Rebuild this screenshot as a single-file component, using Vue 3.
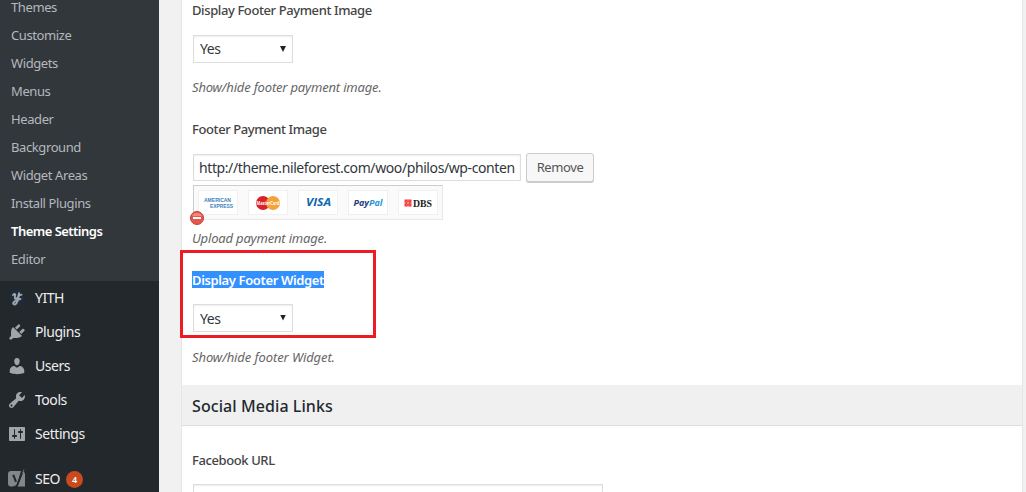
<script setup>
const submenu = ['Themes', 'Customize', 'Widgets', 'Menus', 'Header', 'Background', 'Widget Areas', 'Install Plugins', 'Theme Settings', 'Editor']
const menu = ['YITH', 'Plugins', 'Users', 'Tools', 'Settings', 'SEO']
</script>

<template>
  <div class="page">
    <nav class="sidebar">
      <ul class="submenu">
        <li v-for="s in submenu" :key="s" :class="{ current: s === 'Theme Settings' }"><span>{{ s }}</span></li>
      </ul>
      <ul class="menu">
        <li v-for="m in menu" :key="m" :class="m.toLowerCase()">
          <svg v-if="m === 'YITH'" class="icon" viewBox="0 0 20 20">
            <circle cx="10" cy="10" r="7.8" fill="#1d2c3d" />
            <path d="M6 7q1.500-1.800 2.200-.4q-.8 3.500.1 4.300q1.500.3 2.800-2.300l1-3.300M12.100 5.300q-.9 7.400-2.600 9.800q-2 2.500-3.300.7q-.4-2 3.300-3.200l4-1.700M12.500 7.400l2-.7" fill="none" stroke="#a0a5aa" stroke-width="1.900" stroke-linecap="round" />
          </svg>
          <svg v-else-if="m === 'Plugins'" class="icon" viewBox="0 0 20 20">
            <path d="M13.110 4.360L9.870 7.600 8 5.730l3.240-3.240c.35-.34 1.050-.2 1.560.32.520.510.660 1.210.310 1.550zm-8 1.770l.910-1.120 9.010 9.010-1.190.840c-.710.710-2.630 1.160-3.820 1.160H6.140L4.900 17.260c-.590.590-1.540.590-2.120 0-.590-.580-.590-1.530 0-2.120l1.240-1.240v-3.880c0-1.130.400-3.190 1.090-3.890zm7.260 3.970l3.240-3.240c.340-.35 1.040-.21 1.550.31.520.510.660 1.210.310 1.550l-3.240 3.250z" />
          </svg>
          <svg v-else-if="m === 'Users'" class="icon" viewBox="0 0 20 20">
            <path d="M10 9.250c-2.270 0-2.730-3.440-2.730-3.440C7 4.020 7.820 2 9.970 2c2.160 0 2.980 2.020 2.710 3.810 0 0-.410 3.440-2.680 3.440zm0 2.570L12.720 10c2.390 0 4.520 2.330 4.520 4.530v2.490s-3.650 1.130-7.240 1.130c-3.650 0-7.240-1.130-7.240-1.130v-2.490c0-2.250 1.940-4.480 4.470-4.480z" />
          </svg>
          <svg v-else-if="m === 'Tools'" class="icon" viewBox="0 0 20 20">
            <path d="M16.680 9.770c-1.340 1.340-3.300 1.670-4.950.990l-5.410 6.520c-.990.990-2.590.990-3.580 0s-.990-2.590 0-3.570l6.520-5.420c-.680-1.650-.350-3.610.990-4.950 1.280-1.280 3.120-1.620 4.720-1.060l-2.890 2.890 2.820 2.820 2.860-2.870c.530 1.580.180 3.390-1.080 4.650zM3.810 16.210c.4.390 1.040.390 1.430 0 .4-.4.400-1.040 0-1.430-.390-.4-1.030-.4-1.430 0-.390.390-.390 1.030 0 1.430z" />
          </svg>
          <svg v-else-if="m === 'Settings'" class="icon" viewBox="0 0 20 20">
            <path fill-rule="evenodd" d="M18 16V4c0-.550-.450-1-1-1H3c-.550 0-1 .450-1 1v12c0 .550.450 1 1 1h14c.550 0 1-.450 1-1zM8 11h1c.550 0 1 .450 1 1s-.450 1-1 1H8v1.500c0 .280-.220.500-.5.500s-.5-.220-.5-.5V13H6c-.550 0-1-.450-1-1s.450-1 1-1h1V5.500c0-.280.220-.5.500-.5s.5.220.5.500V11zm5-2h-1c-.550 0-1-.450-1-1s.450-1 1-1h1V5.500c0-.280.220-.5.500-.5s.5.220.5.500V7h1c.550 0 1 .450 1 1s-.450 1-1 1h-1v5.500c0 .280-.220.500-.5.500s-.5-.220-.5-.5V9z" />
          </svg>
          <svg v-else class="icon" viewBox="0 0 20 20">
            <path d="M4 2h10l-4.500 15.500H4q-3 0-3-3V5q0-3 3-3zM16 2.500q2 .8 2 2.500v12.500h-7.500z" fill="#82878c" />
            <path d="M5.500 6.800h1.200l2.300 6M16.300.5l-5.800 15q-1 2.600-4 2.600" fill="none" stroke="#23282d" stroke-width="2" />
            <path d="M17 .4l-1.500 3.800" fill="none" stroke="#82878c" stroke-width=".8" />
          </svg>
          <span class="name">{{ m }}</span>
          <b v-if="m === 'SEO'" class="badge">4</b>
        </li>
      </ul>
    </nav>

    <main class="panel">
      <section class="field first">
        <h4>Display Footer Payment Image</h4>
        <div class="select"><span>Yes</span><i></i></div>
        <p>Show/hide footer payment image.</p>
      </section>
      <section class="field image">
        <h4>Footer Payment Image</h4>
        <div class="row">
          <div class="input"><span>http://theme.nileforest.com/woo/philos/wp-conten</span></div>
          <button><span>Remove</span></button>
        </div>
        <div class="preview">
          <svg class="cards" width="248" height="33" viewBox="0 0 248 33">
            <g fill="#fff" stroke="#f0f0f0">
              <rect v-for="n in 5" :key="n" :x="n * 50 - 45.500" y="4.500" width="39" height="24" />
            </g>
            <g class="logo">
              <g class="amex" fill="#3d80bd" font-size="5.400">
                <text x="10" y="15.500" textLength="27" lengthAdjust="spacingAndGlyphs">AMERICAN</text>
                <text x="16" y="21.500" textLength="23" lengthAdjust="spacingAndGlyphs">EXPRESS</text>
              </g>
              <circle cx="69" cy="17" r="7" fill="#d9222a" />
              <circle cx="79" cy="17" r="7" fill="#f2a33a" />
              <text x="62.500" y="19" font-size="5.500" fill="#fff" textLength="23" lengthAdjust="spacingAndGlyphs">MasterCard</text>
              <text x="112" y="20" font-size="11" font-style="italic" fill="#0d66b0" textLength="25" lengthAdjust="spacingAndGlyphs">VISA</text>
              <text x="159.500" y="19.500" font-size="9" font-style="italic" fill="#253b80" textLength="29" lengthAdjust="spacingAndGlyphs">Pay<tspan fill="#2997d8">Pal</tspan></text>
              <rect x="210.500" y="13.500" width="7" height="7" fill="#f23c43" />
              <path d="M214 13v2M214 19v2M210 17h2M216 17h2M212.500 15.500l3 3M215.500 15.500l-3 3" stroke="#ffb0b0" stroke-width=".7" />
              <text class="dbs" x="219" y="20.500" font-size="10" fill="#222" textLength="19" lengthAdjust="spacingAndGlyphs">DBS</text>
            </g>
          </svg>
          <svg class="delete" viewBox="0 0 14 14">
            <circle cx="7" cy="7" r="6.500" fill="#e8574c" stroke="#bd4038" />
            <path d="M2 5a5.200 4.200 0 0 1 10 0z" fill="#ee8b81" />
            <rect x="3" y="6" width="8" height="2" fill="#fff" />
          </svg>
        </div>
        <p>Upload payment image.</p>
      </section>
      <section class="field widget">
        <h4><mark>Display Footer Widget</mark></h4>
        <div class="select"><span>Yes</span><i></i></div>
        <p>Show/hide footer Widget.</p>
        <div class="outline"></div>
      </section>
      <h3><span>Social Media Links</span></h3>
      <section class="field social">
        <h4>Facebook URL</h4>
        <div class="input wide"></div>
      </section>
    </main>
  </div>
</template>

<style>
body { margin: 0; overflow: hidden; }
</style>

<style scoped>
* { box-sizing: border-box; }
.page { display: flex; width: 1026px; height: 492px; overflow: hidden; background: #f1f1f1; font: 13px/18px "Noto Sans", "Open Sans", sans-serif; color: #444; }
ul { list-style: none; margin: 0; padding: 0; }
.sidebar { width: 159px; flex: none; background: #23282d; }
.submenu { height: 281px; background: #32373c; }
.submenu li { height: 28px; line-height: 28px; padding-left: 11px; color: #b4b9be; letter-spacing: -.4px; }
.submenu li:first-child { height: 21px; line-height: 14px; }
.submenu .current { color: #fff; font-weight: 600; letter-spacing: -.52px; }
.menu li { display: flex; align-items: center; height: 34px; padding-left: 7px; color: #eee; font-size: 14px; letter-spacing: -.45px; }
.menu .seo { margin-top: 11px; }
.icon { width: 20px; height: 20px; margin-right: 8px; fill: #a0a5aa; }
.badge { width: 17px; height: 17px; margin-left: 6px; border-radius: 50%; background: #ca4a1f; color: #fff; font-size: 9px; line-height: 17px; text-align: center; font-weight: 600; letter-spacing: 0; }
.panel { width: 842px; flex: none; margin-left: 22px; border: solid #e5e5e5; border-width: 0 1px; background: #fff; }
.field { position: relative; padding-left: 10px; }
h4, p, h3 { margin: 0; }
h4 { height: 18px; font-weight: 500; font-size: 13px; line-height: 18px; white-space: nowrap; letter-spacing: -.4px; }
p { height: 18px; font-style: italic; color: #666; line-height: 18px; letter-spacing: -.18px; }
.first { height: 120px; padding-top: 1px; }
.first .select { margin-top: 16px; }
.select { display: flex; align-items: center; justify-content: space-between; width: 100px; height: 28px; margin: 15px 0 0 1px; padding: 0 6px; border: 1px solid #ddd; box-shadow: inset 0 1px 2px rgba(0,0,0,.07); color: #32373c; font-size: 14px; letter-spacing: -.4px; }
.select i { width: 6px; height: 6px; background: #222; clip-path: polygon(0 0, 100% 0, 50% 100%); }
.first p { margin-top: 15px; }
.image { height: 151px; }
.row { display: flex; gap: 5px; margin: 15px 0 0 1px; }
.input { width: 328px; height: 27px; margin-top: 1px; padding-left: 5px; border: 1px solid #ddd; box-shadow: inset 0 1px 2px rgba(0,0,0,.07); color: #32373c; font-size: 14px; line-height: 26px; white-space: nowrap; overflow: hidden; letter-spacing: -.4px; }
button { width: 68px; height: 29px; padding: 0 0 1px; border: 1px solid #ccc; border-radius: 3px; background: #f7f7f7; box-shadow: 0 1px 0 #ccc; color: #555; font: 13px/25px "Noto Sans", sans-serif; letter-spacing: -.4px; }
.preview { position: relative; width: 250px; height: 35px; margin: 3px 0 0 1px; border: 1px solid #e7e7e7; border-top-color: #ccc; border-left-color: #ccc; background: #fafafa; }
.cards { display: block; }
.logo { font-family: "Open Sans", sans-serif; font-weight: 700; letter-spacing: 0; }
.amex { font-family: "Liberation Sans", sans-serif; }
.dbs { font-family: "Liberation Serif", serif; }
.delete { position: absolute; left: -4px; top: 25px; width: 14px; height: 14px; }
.image p { margin-top: 9px; }
.widget { height: 114px; }
mark { display: inline-block; width: 132px; height: 17px; line-height: 18px; background: #3390ff; color: #fff; font-weight: 600; letter-spacing: -.37px; }
.widget .select { margin-top: 15px; padding-top: 1px; }
.widget .select i { margin-top: -2px; }
.widget p { margin-top: 16px; letter-spacing: -.1px; }
.outline { position: absolute; left: -2px; top: -21px; width: 196px; height: 88px; border: 3px solid #ed1c24; }
h3 { height: 41px; padding-left: 10px; background: #f0f0f0; border-bottom: 1px solid #ddd; color: #23282d; font-size: 16px; line-height: 42px; font-weight: 500; letter-spacing: .08px; }
.social { padding-top: 25px; }
.wide { width: 410px; margin: 15px 0 0 1px; }
</style>
